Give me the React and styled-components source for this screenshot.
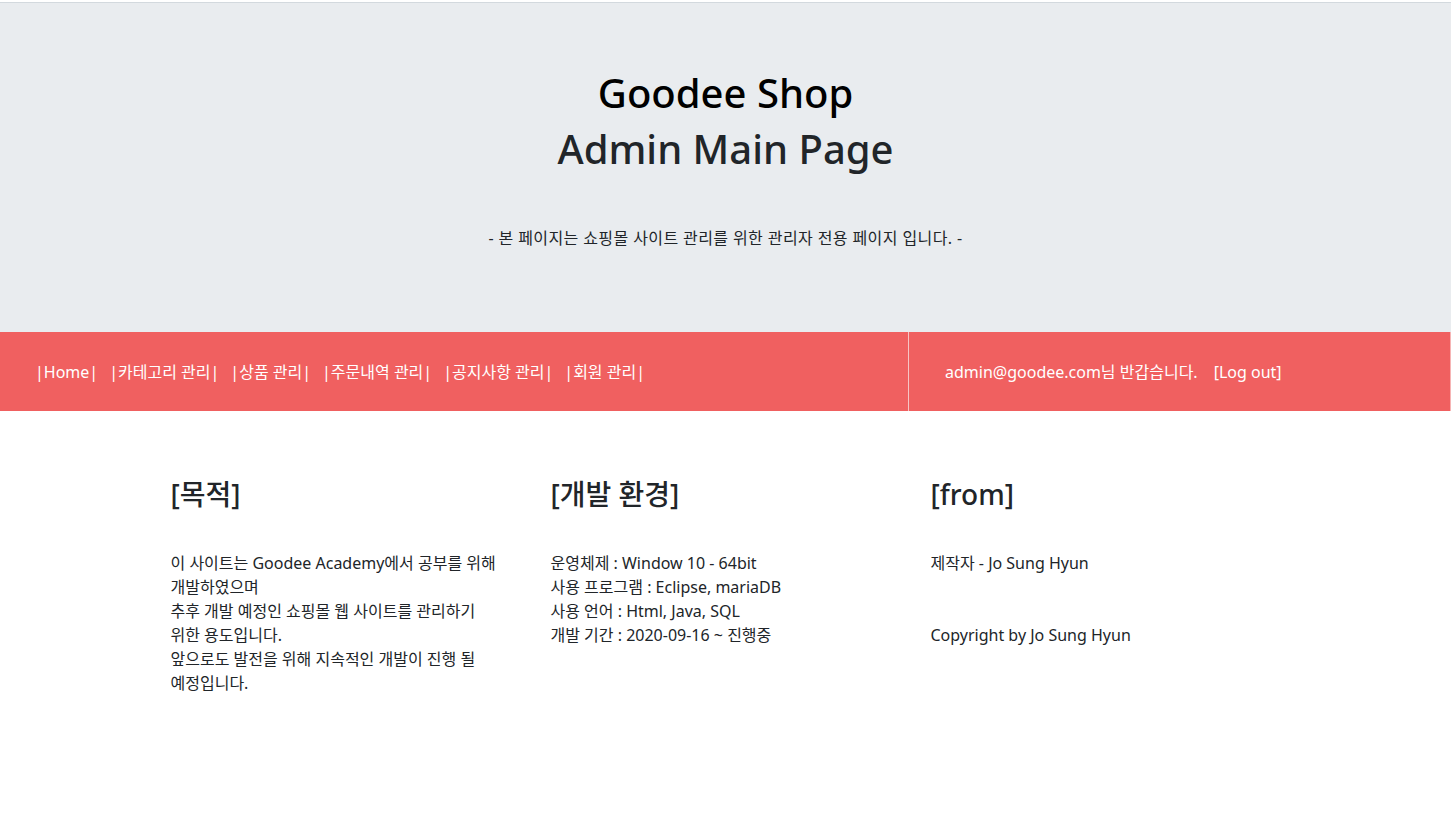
import React from 'react';
import styled, { createGlobalStyle } from 'styled-components';

const GlobalStyle = createGlobalStyle`
  * { box-sizing: border-box; }
  body {
    margin: 0;
    background: #fff;
    color: #212529;
    font-family: "Noto Sans", "Noto Sans CJK KR", sans-serif;
    font-size: 16px;
    line-height: 1.5;
  }
`;

const Page = styled.div`
  padding-top: 2px;
`;

// 상단 점보트론
const Jumbotron = styled.header`
  background: #e9ecef;
  border-top: 1px solid #d3d9de;
  padding: 66px 32px 82px;
  text-align: center;
`;

const Title = styled.h1`
  margin: 0 0 8px;
  font-size: 40px;
  line-height: 48px;
  font-weight: 500;
  color: ${(p) => (p.$dark ? '#000' : '#212529')};
`;

const Lead = styled.p`
  margin: 53px 0 0;
  font-size: 16px;
  letter-spacing: 0.4px;
`;

// 메뉴 바
const NavTable = styled.nav`
  display: grid;
  grid-template-columns: 908px 1fr;
  height: 79px;
  background: #f06060;
  border-right: 1px solid #f6b5b5;
`;

const NavCell = styled.div`
  display: flex;
  align-items: center;
  padding-left: ${(p) => p.$pad}px;
  gap: ${(p) => p.$gap}px;
  color: #fff;
  font-size: 16px;
  white-space: nowrap;
  border-left: ${(p) => (p.$divider ? '1px solid #f7c4c4' : 'none')};
`;

const NavLink = styled.a`
  color: #fff;
  text-decoration: none;
`;

// 본문 영역
const Container = styled.main`
  width: 1140px;
  margin: 0 auto;
  display: grid;
  grid-template-columns: repeat(3, 1fr);
  padding-top: 66px;
`;

const Col = styled.section`
  padding: 0 15px;
`;

const Heading = styled.h3`
  margin: 0 0 40px;
  font-size: 28px;
  line-height: 34px;
  font-weight: 500;
`;

const Text = styled.p`
  margin: 0;
  white-space: nowrap;
`;

const Gap = styled.div`
  height: ${(p) => p.$h}px;
`;

const menus = ['Home', '카테고리 관리', '상품 관리', '주문내역 관리', '공지사항 관리', '회원 관리'];

const App = () => {
  return (
    <Page>
      <GlobalStyle />
      <Jumbotron>
        <Title $dark>Goodee Shop</Title>
        <Title>Admin Main Page</Title>
        <Lead>- 본 페이지는 쇼핑몰 사이트 관리를 위한 관리자 전용 페이지 입니다. -</Lead>
      </Jumbotron>

      <NavTable>
        <NavCell $pad={35} $gap={11}>
          {menus.map((m) => (
            <NavLink key={m} href="#">|{m}|</NavLink>
          ))}
        </NavCell>
        <NavCell $pad={36} $gap={16} $divider>
          <span>admin@goodee.com님 반갑습니다.</span>
          <NavLink href="#">[Log out]</NavLink>
        </NavCell>
      </NavTable>

      <Container>
        <Col>
          <Heading>[목적]</Heading>
          <Text>이 사이트는 Goodee Academy에서 공부를 위해</Text>
          <Text>개발하였으며</Text>
          <Text>추후 개발 예정인 쇼핑몰 웹 사이트를 관리하기</Text>
          <Text>위한 용도입니다.</Text>
          <Text>앞으로도 발전을 위해 지속적인 개발이 진행 될</Text>
          <Text>예정입니다.</Text>
        </Col>
        <Col>
          <Heading>[개발 환경]</Heading>
          <Text>운영체제 : Window 10 - 64bit</Text>
          <Text>사용 프로그램 : Eclipse, mariaDB</Text>
          <Text>사용 언어 : Html, Java, SQL</Text>
          <Text>개발 기간 : 2020-09-16 ~ 진행중</Text>
        </Col>
        <Col>
          <Heading>[from]</Heading>
          <Text>제작자 - Jo Sung Hyun</Text>
          <Gap $h={48} />
          <Text>Copyright by Jo Sung Hyun</Text>
        </Col>
      </Container>
    </Page>
  );
};

export default App;
